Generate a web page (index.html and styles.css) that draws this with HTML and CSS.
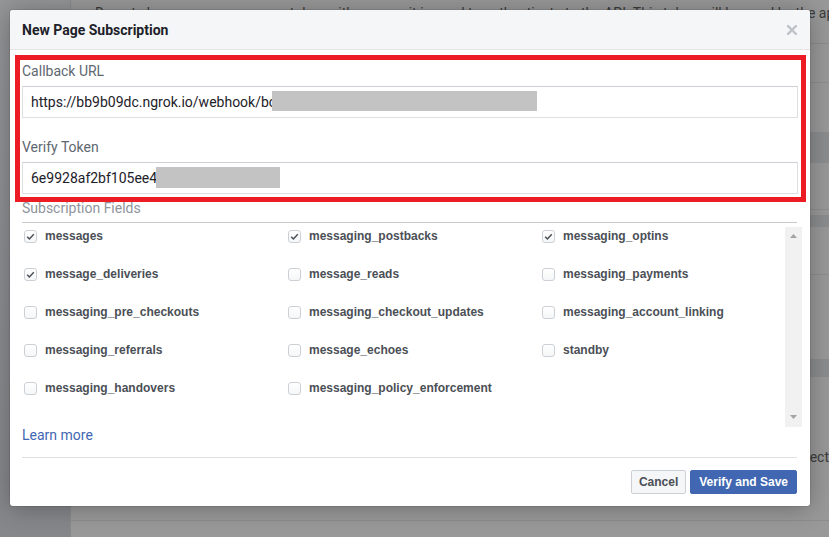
FILE: index.html
```html
<!DOCTYPE html>
<html lang="en">
<head>
<meta charset="utf-8">
<title>New Page Subscription</title>
<link rel="stylesheet" href="styles.css">
</head>
<body>
<div class="page">
  <aside class="sidebar"></aside>
  <main class="main">
    <p class="intro">
      <span class="intro-line">Do not share your page access token with anyone, it is used to authenticate to the API. This token will be used by the app, which is required</span>
      <span class="intro-line">to receive updates for the subscribed fields, and must be kept secret by the owner of the page</span>
    </p>
    <div class="sec s1"></div>
    <div class="sec s2"></div>
    <div class="dark d1"></div>
    <div class="sec s3"></div>
    <div class="sec s4"></div>
    <div class="dark d2"></div>
    <div class="sec s5"></div>
    <div class="sec s6"></div>
    <div class="dark d3"></div>
    <div class="sec s7"><span class="tail-text">Choose the page to select</span></div>
    <div class="sec s8"></div>
  </main>
</div>

<div class="modal">
  <div class="modal-header">
    <h2 class="modal-title">New Page Subscription</h2>
    <span class="close">
      <svg width="10" height="10" viewBox="0 0 10 10"><path d="M1 1 L9 9 M9 1 L1 9" stroke="#bec2c9" stroke-width="2.4" stroke-linecap="square" fill="none"/></svg>
    </span>
  </div>
  <div class="modal-body">
    <div class="field-label">Callback URL</div>
    <div class="input"><span>https://bb9b09dc.ngrok.io/webhook/bcc</span><span class="redact redact-url"></span></div>
    <div class="field-label label-gap">Verify Token</div>
    <div class="input"><span>6e9928af2bf105ee4c</span><span class="redact redact-token"></span></div>
    <div class="section-label">Subscription Fields</div>
    <div class="rule"></div>
    <div class="fields">
      <div class="field-grid">
        <div class="opt"><span class="cb on"><svg width="11" height="11" viewBox="0 0 11 11"><path d="M2.2 5.8 L4.4 8 L8.8 3.2" stroke="#4b4f56" stroke-width="1.5" fill="none"/></svg></span>messages</div>
        <div class="opt"><span class="cb on"><svg width="11" height="11" viewBox="0 0 11 11"><path d="M2.2 5.8 L4.4 8 L8.8 3.2" stroke="#4b4f56" stroke-width="1.5" fill="none"/></svg></span>messaging_postbacks</div>
        <div class="opt"><span class="cb on"><svg width="11" height="11" viewBox="0 0 11 11"><path d="M2.2 5.8 L4.4 8 L8.8 3.2" stroke="#4b4f56" stroke-width="1.5" fill="none"/></svg></span>messaging_optins</div>
        <div class="opt"><span class="cb on"><svg width="11" height="11" viewBox="0 0 11 11"><path d="M2.2 5.8 L4.4 8 L8.8 3.2" stroke="#4b4f56" stroke-width="1.5" fill="none"/></svg></span>message_deliveries</div>
        <div class="opt"><span class="cb"></span>message_reads</div>
        <div class="opt"><span class="cb"></span>messaging_payments</div>
        <div class="opt"><span class="cb"></span>messaging_pre_checkouts</div>
        <div class="opt"><span class="cb"></span>messaging_checkout_updates</div>
        <div class="opt"><span class="cb"></span>messaging_account_linking</div>
        <div class="opt"><span class="cb"></span>messaging_referrals</div>
        <div class="opt"><span class="cb"></span>message_echoes</div>
        <div class="opt"><span class="cb"></span>standby</div>
        <div class="opt"><span class="cb"></span>messaging_handovers</div>
        <div class="opt"><span class="cb"></span>messaging_policy_enforcement</div>
      </div>
      <div class="scrollbar">
        <svg width="7" height="4" viewBox="0 0 7 4"><path d="M0 4 L3.5 0 L7 4 Z" fill="#a3a3a3"/></svg>
        <svg width="7" height="4" viewBox="0 0 7 4"><path d="M0 0 L3.5 4 L7 0 Z" fill="#a3a3a3"/></svg>
      </div>
    </div>
    <a class="learn" href="#">Learn more</a>
    <div class="rule-foot"></div>
    <div class="actions">
      <button class="btn btn-cancel">Cancel</button>
      <button class="btn btn-primary">Verify and Save</button>
    </div>
  </div>
  <div class="annotation"></div>
</div>
</body>
</html>
```

FILE: styles.css
```css
* { box-sizing: border-box; }

html, body {
  margin: 0;
  padding: 0;
  width: 829px;
  height: 537px;
  overflow: hidden;
}

body {
  background: #999999;
  font-family: Roboto, "Liberation Sans", Arial, sans-serif;
  position: relative;
}

.page {
  display: flex;
  height: 537px;
}

.sidebar {
  width: 71px;
  flex: none;
  background: linear-gradient(#959698, #86878b);
  border-right: 1px solid #8a8b8d;
}

.main {
  flex: 1;
  display: flex;
  flex-direction: column;
  background: #999999;
  overflow: hidden;
}

.intro {
  margin: 0;
  padding: 3px 0 0 24px;
  height: 44px;
  border-bottom: 1px solid #8c8c8c;
  font-size: 14px;
  line-height: 20px;
  color: #3c3c3c;
  white-space: nowrap;
  overflow: hidden;
}

.intro-line { display: block; }

.sec { border-bottom: 1px solid #8e8e8e; }
.dark { background: #8c8d8f; }

.s1 { height: 39px; }
.s2 { height: 49px; border-bottom: none; }
.d1 { height: 31px; }
.s3 { height: 47px; }
.s4 { height: 5px; border-bottom: none; }
.d2 { height: 12px; }
.s5 { height: 48px; }
.s6 { height: 84px; border-bottom: none; }
.dark.d3 { height: 18px; }
.s7 {
  height: 144px;
  padding-top: 70px;
  text-align: right;
  font-size: 14px;
  line-height: 20px;
  color: #3c3c3c;
  white-space: nowrap;
}
.s8 { flex: 1; border-bottom: none; }

/* modal */
.modal {
  position: absolute;
  left: 10px;
  top: 10px;
  width: 800px;
  background: #ffffff;
  border-radius: 3px;
  box-shadow: 0 2px 26px rgba(0, 0, 0, 0.3), 0 0 0 1px rgba(0, 0, 0, 0.08);
}

.modal-header {
  height: 40px;
  display: flex;
  align-items: center;
  justify-content: space-between;
  padding: 0 13px 0 12px;
  background: #f5f6f7;
  border-bottom: 1px solid #e5e5e5;
  border-radius: 3px 3px 0 0;
}

.modal-title {
  margin: 0;
  font-family: Roboto, "Liberation Sans", sans-serif;
  font-weight: 700;
  font-size: 14px;
  color: #1d2129;
  line-height: 18px;
}

.close {
  display: flex;
  width: 10px;
  height: 10px;
}

.modal-body {
  padding: 13px 12px 12px;
}

.field-label, .section-label {
  font-size: 14px;
  line-height: 16px;
  color: #606770;
}

.label-gap { margin-top: 21px; }

.input {
  position: relative;
  margin-top: 7px;
  height: 32px;
  display: flex;
  align-items: center;
  padding: 0 8px;
  border: 1px solid #dddfe2;
  border-top-color: #ccd0d5;
  background: #fff;
  font-size: 14px;
  color: #1d2129;
  white-space: nowrap;
  overflow: hidden;
}

.redact {
  position: absolute;
  top: 4px;
  background: #c3c3c3;
}

.redact-url { left: 249px; width: 265px; height: 20px; }
.redact-token { left: 133px; width: 124px; height: 21px; }

.section-label {
  margin-top: 6px;
  color: #90949c;
}

.rule {
  margin-top: 6px;
  margin-right: 1px;
  border-top: 1px solid #c9c9c9;
}

.fields {
  margin-top: 4px;
  height: 200px;
  display: flex;
  margin-right: -4px;
}

.field-grid {
  flex: 1;
  display: grid;
  grid-template-columns: 264px 254px 1fr;
  grid-auto-rows: 18px;
  row-gap: 20px;
  align-content: start;
  padding-left: 2px;
}

.opt {
  display: flex;
  align-items: center;
  gap: 8px;
  font-family: "Liberation Sans", Arial, sans-serif;
  font-weight: 700;
  font-size: 12px;
  color: #4b4f56;
  white-space: nowrap;
}

.cb {
  width: 13px;
  height: 13px;
  flex: none;
  border: 1px solid #ccd0d5;
  border-radius: 3px;
  background: linear-gradient(#ffffff, #f5f6f7);
  display: flex;
  align-items: center;
  justify-content: center;
}

.scrollbar {
  width: 17px;
  flex: none;
  background: #f1f1f1;
  display: flex;
  flex-direction: column;
  align-items: center;
  justify-content: space-between;
  padding: 7px 0 8px;
}

.learn {
  display: block;
  font-size: 14px;
  line-height: 16px;
  color: #4267b2;
  text-decoration: none;
}

.rule-foot {
  margin-top: 14px;
  margin-right: 1px;
  border-top: 1px solid #dddfe2;
}

.actions {
  margin-top: 12px;
  margin-right: 1px;
  display: flex;
  justify-content: flex-end;
  gap: 4px;
}

.btn {
  height: 24px;
  padding: 0 7px;
  border: 1px solid #ccd0d5;
  border-radius: 2px;
  font-family: "Liberation Sans", Arial, sans-serif;
  font-weight: 700;
  font-size: 12px;
  line-height: 22px;
  color: #4b4f56;
  background: #f5f6f7;
}

.btn-primary {
  padding: 0 8px;
  background: #4267b2;
  border-color: #4267b2;
  color: #ffffff;
}

.annotation {
  position: absolute;
  left: 5px;
  top: 45px;
  width: 791px;
  height: 147px;
  border: 5px solid #ed1c24;
  pointer-events: none;
}
```
